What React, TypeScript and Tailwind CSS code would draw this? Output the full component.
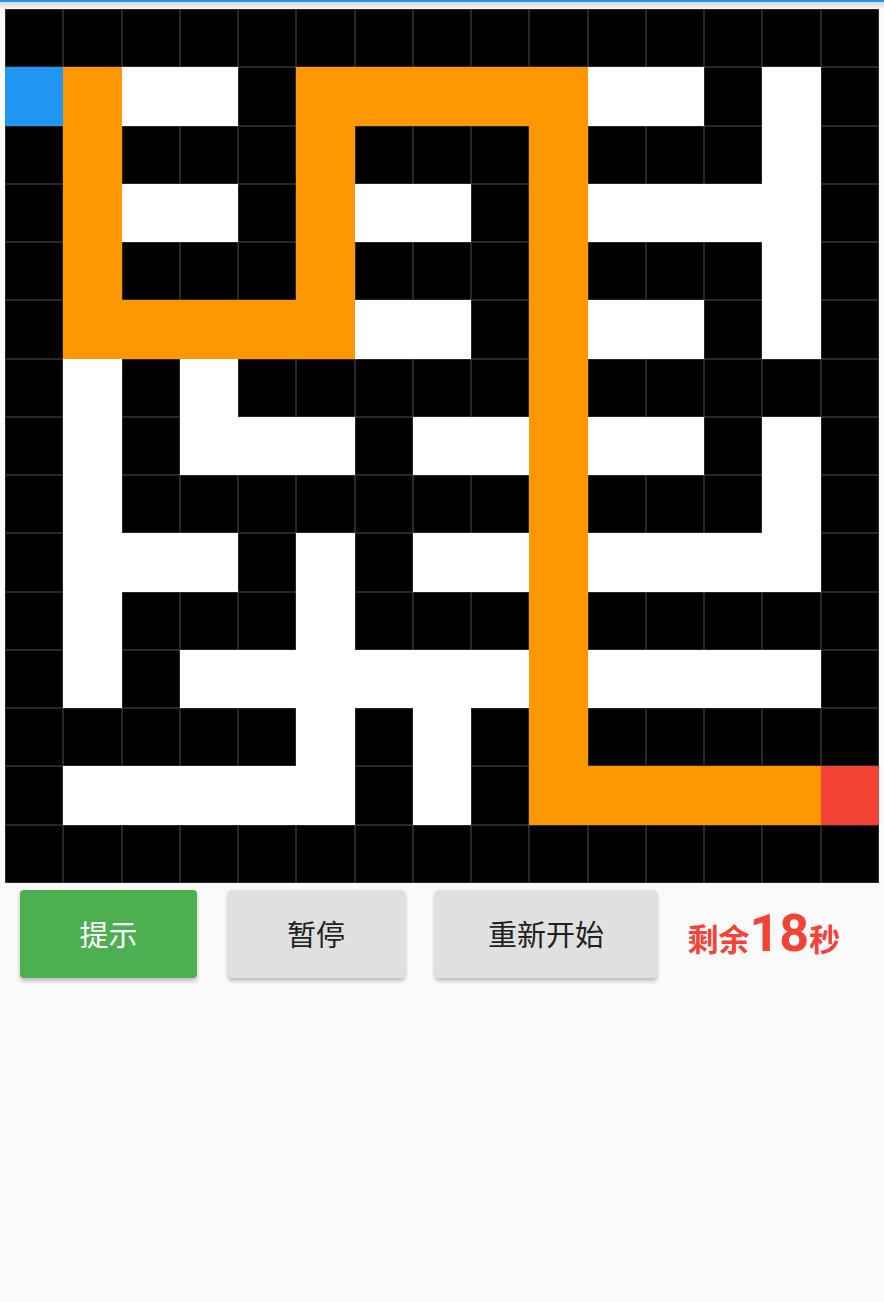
const MAZE = [
  "XXXXXXXXXXXXXXX",
  "SO..XOOOOO..X.X",
  "XOXXXOXXXOXXX.X",
  "XO..XO..XO....X",
  "XOXXXOXXXOXXX.X",
  "XOOOOO..XO..X.X",
  "X.X.XXXXXOXXXXX",
  "X.X...X..O..X.X",
  "X.XXXXXXXOXXX.X",
  "X...X.X..O....X",
  "X.XXX.XXXOXXXXX",
  "X.X......O....X",
  "XXXXX.X.XOXXXXX",
  "X.....X.XOOOOOE",
  "XXXXXXXXXXXXXXX",
];

const cellClass = (c: string) => {
  if (c === "X") return "bg-black shadow-[inset_0_0_0_0.5px_#4e4e4e]";
  if (c === "O") return "bg-[#ff9800]";
  if (c === "S") return "bg-[#2196f3]";
  if (c === "E") return "bg-[#f44336]";
  return "bg-white";
};

const App: React.FC = () => {
  return (
    <div className="w-[884px] h-[1302px] bg-[#fafafa] font-['Roboto','Noto_Sans_CJK_SC',sans-serif]">
      <div className="h-[2px] bg-[#2196f3]" />
      <div className="h-[6px] bg-gradient-to-b from-[#d8d8d8] to-[#f4f4f4]" />
      <div className="ml-[5px] mt-px w-[874px] h-[874px] grid grid-cols-15 grid-rows-15">
        {MAZE.map((row, r) =>
          row.split("").map((c, i) => <div key={`${r}-${i}`} className={cellClass(c)} />)
        )}
      </div>
      <div className="flex items-center gap-[30.5px] ml-[20px] mt-[7px]">
        <button className="w-[177px] h-[88px] pt-[6px] rounded-[4px] bg-[#4caf50] text-white text-[29px] shadow-[0_3px_4px_rgba(0,0,0,0.25)]">
          提示
        </button>
        <button className="w-[177px] h-[88px] pt-[6px] rounded-[4px] bg-[#e0e0e0] text-[#212121] text-[29px] shadow-[0_3px_4px_rgba(0,0,0,0.25)]">
          暂停
        </button>
        <button className="w-[222px] h-[88px] pt-[6px] rounded-[4px] bg-[#e0e0e0] text-[#212121] text-[29px] shadow-[0_3px_4px_rgba(0,0,0,0.25)]">
          重新开始
        </button>
        <div className="flex items-baseline pt-[4px] text-[#f44336] font-bold">
          <span className="text-[31px]">剩余</span>
          <span className="text-[52px] leading-none">18</span>
          <span className="text-[31px]">秒</span>
        </div>
      </div>
    </div>
  );
};

export default App;
